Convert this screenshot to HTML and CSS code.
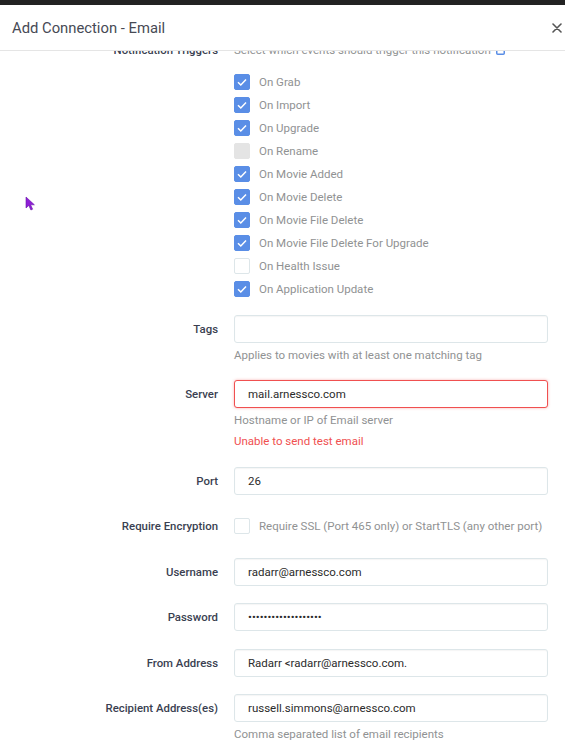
FILE: index.html
```html
<!DOCTYPE html>
<html>
<head>
<meta charset="utf-8" />
<title>Add Connection - Email</title>
<link rel="stylesheet" href="styles.css">
</head>
<body>
<div class="backdrop"></div>
<div class="modal">
	<div class="modal_header">
		<h2 class="modal_title">Add Connection - Email</h2>
		<svg class="modal_close" width="10" height="10" viewBox="0 0 10 10"><path d="M1 1L9 9M9 1L1 9" stroke="#555" stroke-width="1.6" stroke-linecap="round"/></svg>
	</div>
	<div class="modal_body">
		<div class="form">
			<div class="group triggers">
				<label class="label">Notification Triggers</label>
				<div class="field">
					<div class="help">Select which events should trigger this notification <svg class="help_icon" width="9" height="9" viewBox="0 0 9 9"><rect x="0.75" y="0.75" width="7.5" height="7.5" rx="1" fill="none" stroke="#5a8ee6" stroke-width="1.5"/></svg></div>
					<ul class="checks">
						<li class="check"><span class="box on"></span>On Grab</li>
						<li class="check"><span class="box on"></span>On Import</li>
						<li class="check"><span class="box on"></span>On Upgrade</li>
						<li class="check"><span class="box disabled"></span>On Rename</li>
						<li class="check"><span class="box on"></span>On Movie Added</li>
						<li class="check"><span class="box on"></span>On Movie Delete</li>
						<li class="check"><span class="box on"></span>On Movie File Delete</li>
						<li class="check"><span class="box on"></span>On Movie File Delete For Upgrade</li>
						<li class="check"><span class="box"></span>On Health Issue</li>
						<li class="check"><span class="box on"></span>On Application Update</li>
					</ul>
				</div>
			</div>
			<div class="group">
				<label class="label">Tags</label>
				<div class="field">
					<input class="input" type="text" value="">
					<div class="help">Applies to movies with at least one matching tag</div>
				</div>
			</div>
			<div class="group">
				<label class="label">Server</label>
				<div class="field">
					<input class="input error" type="text" value="mail.arnessco.com">
					<div class="help">Hostname or IP of Email server</div>
					<div class="help error_text">Unable to send test email</div>
				</div>
			</div>
			<div class="group">
				<label class="label">Port</label>
				<div class="field"><input class="input" type="text" value="26"></div>
			</div>
			<div class="group">
				<label class="label">Require Encryption</label>
				<div class="field">
					<div class="check inline"><span class="box"></span>Require SSL (Port 465 only) or StartTLS (any other port)</div>
				</div>
			</div>
			<div class="group">
				<label class="label">Username</label>
				<div class="field"><input class="input" type="text" value="radarr@arnessco.com"></div>
			</div>
			<div class="group">
				<label class="label">Password</label>
				<div class="field"><input class="input" type="password" value="passwordpassword123"></div>
			</div>
			<div class="group">
				<label class="label">From Address</label>
				<div class="field"><input class="input" type="text" value="Radarr &lt;radarr@arnessco.com."></div>
			</div>
			<div class="group">
				<label class="label">Recipient Address(es)</label>
				<div class="field">
					<input class="input" type="text" value="russell.simmons@arnessco.com">
					<div class="help">Comma separated list of email recipients</div>
				</div>
			</div>
		</div>
	</div>
</div>
<svg class="cursor" width="11" height="15" viewBox="0 0 11 15"><path d="M1 1L1 12L3.8 9.4L5.9 14L7.6 13.2L5.6 8.8L9.4 8.8Z" fill="#8e1fd6" stroke="#6a14a8" stroke-width="0.6"/></svg>
</body>
</html>
```

FILE: styles.css
```css
html,body{margin:0;padding:0;background:#fff;}
body{font:11.5px/16px Roboto, "Liberation Sans", Arial, sans-serif;color:#3a3f51;width:565px;height:750px;overflow:hidden;position:relative;}
ul,li{margin:0;padding:0;list-style:none;}

.backdrop{height:5px;background:#222;}
.modal{background:#fff;}
.modal_header{display:flex;align-items:center;justify-content:space-between;height:45px;padding:0 3px 0 12px;border-bottom:1px solid #e5e5e5;position:relative;z-index:1;background:#fff;}
.modal_title{margin:0;font-size:14.8px;font-weight:400;color:#474a55;line-height:20px;}

.modal_body{height:699px;overflow:hidden;}
.form{margin-top:-9px;padding-right:17px;}
.group{display:grid;grid-template-columns:218px 1fr;column-gap:16px;margin-bottom:17.5px;}
.group.triggers{margin-bottom:14.5px;}
.label{text-align:right;font-size:11.4px;font-weight:500;color:#3a3f51;line-height:28px;}
.triggers .label{line-height:16px;}
.field{min-width:0;}

.help{color:#909293;line-height:16px;margin-top:4px;}
.triggers .help{margin-top:0;}
.help_icon{vertical-align:-1px;margin-left:2px;}
.error_text{color:#f05050;margin-top:5px;}

.checks{padding-top:12px;}
.check{display:flex;align-items:center;height:23px;color:#909293;white-space:nowrap;}
.check.inline{height:28px;}
.box{width:16px;height:16px;box-sizing:border-box;border:1px solid #dde6e9;border-radius:2px;margin-right:9px;background:#fff;flex:none;}
.box.on{border-color:#5a8ee6;background:#5a8ee6 url("data:image/svg+xml;utf8,<svg xmlns='http://www.w3.org/2000/svg' width='16' height='16'><path d='M4 8.2L6.8 11L12 5.4' fill='none' stroke='white' stroke-width='1.5'/></svg>") center/16px 16px no-repeat;}
.box.disabled{border-color:#e4e4e4;background:#e4e4e4;}

.input{display:block;width:100%;box-sizing:border-box;height:28px;margin:0;padding:0 13px;border:1px solid #dde6e9;border-radius:3px;font:11.5px Roboto, "Liberation Sans", Arial, sans-serif;color:#2b2b2b;background:#fff;outline:none;box-shadow:inset 0 1px 1px rgba(0,0,0,0.04);}
.input.error{border-color:#f05050;box-shadow:0 0 3px rgba(240,80,80,0.45);}

.cursor{position:absolute;left:25px;top:196px;}
```
